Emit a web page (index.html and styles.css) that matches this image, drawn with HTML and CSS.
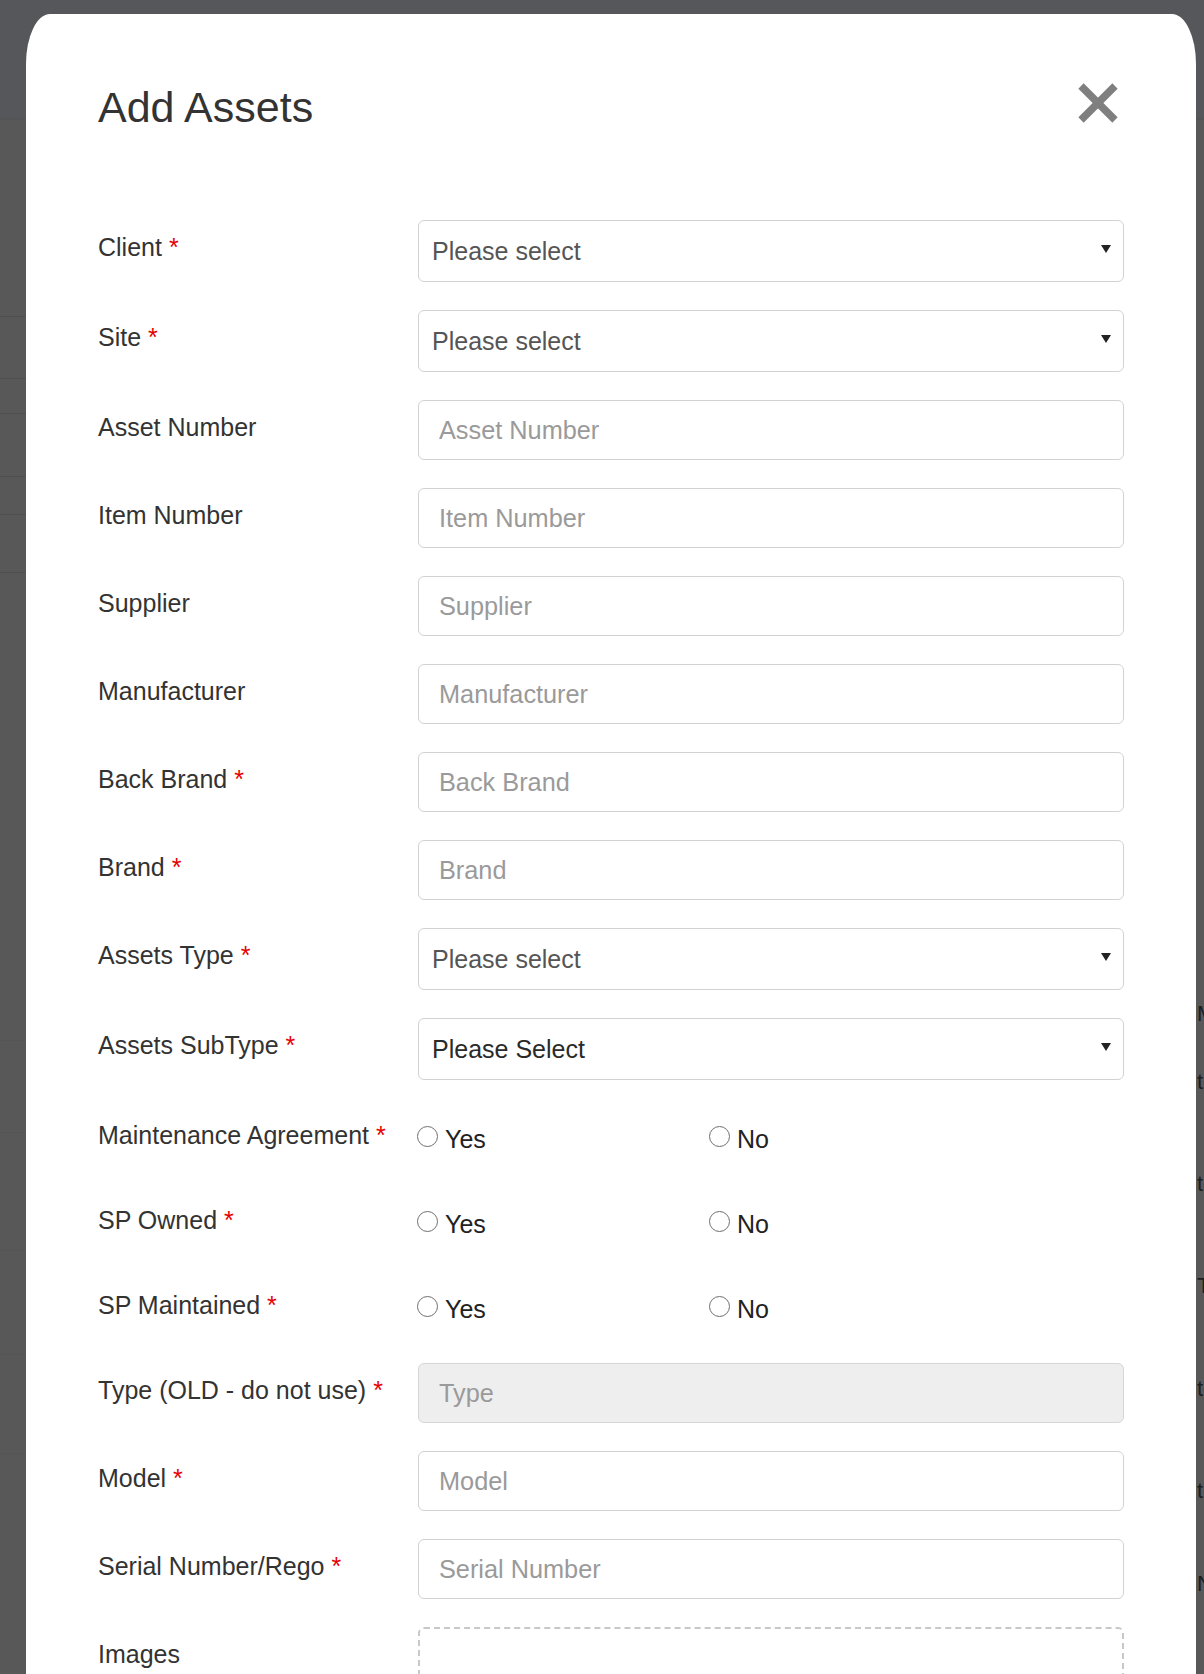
FILE: index.html
```html
<!DOCTYPE html>
<html lang="en">
<head>
<meta charset="utf-8">
<title>Add Assets</title>
<link rel="stylesheet" href="styles.css">
</head>
<body>
<div class="backdrop">
  <div class="bd-top"></div>
  <div class="bd-body">
    <div class="bd-left">
      <div class="bl bl1"></div>
      <div class="bl bl2"></div>
      <div class="bl bl3"></div>
      <div class="bl bl4"></div>
      <div class="bl bl5"></div>
      <div class="bl bl6"></div>
      <div class="bl bl7"></div>
      <div class="bl bl8"></div>
      <div class="bl bl9"></div>
      <div class="bl bl10"></div>
      <div class="bl bl11"></div>
    </div>
    <div class="bd-mid"></div>
    <div class="bd-right">
      <div class="bw w1">Model</div>
      <div class="bw w2">test</div>
      <div class="bw w3">test</div>
      <div class="bw w4">Type</div>
      <div class="bw w5">test</div>
      <div class="bw w6">test</div>
      <div class="bw w7">No</div>
    </div>
  </div>
</div>

<div class="modal">
  <div class="modal-header">
    <h1 class="modal-title">Add Assets</h1>
    <button class="close" type="button" aria-label="Close">
      <svg viewBox="0 0 40 40" width="40" height="40"><line x1="3" y1="3" x2="37" y2="37"/><line x1="37" y1="3" x2="3" y2="37"/></svg>
    </button>
  </div>
  <form class="modal-body">
    <div class="form-group sel-row">
      <label class="form-label">Client <span class="req">*</span></label>
      <div class="control"><div class="select"><span class="sel-text">Please select</span><svg class="caret" viewBox="0 0 10 8" width="10" height="8"><path d="M0 0h10L5 8z"/></svg></div></div>
    </div>
    <div class="form-group sel-row">
      <label class="form-label">Site <span class="req">*</span></label>
      <div class="control"><div class="select"><span class="sel-text">Please select</span><svg class="caret" viewBox="0 0 10 8" width="10" height="8"><path d="M0 0h10L5 8z"/></svg></div></div>
    </div>
    <div class="form-group">
      <label class="form-label">Asset Number</label>
      <div class="control"><input class="input" type="text" placeholder="Asset Number"></div>
    </div>
    <div class="form-group">
      <label class="form-label">Item Number</label>
      <div class="control"><input class="input" type="text" placeholder="Item Number"></div>
    </div>
    <div class="form-group">
      <label class="form-label">Supplier</label>
      <div class="control"><input class="input" type="text" placeholder="Supplier"></div>
    </div>
    <div class="form-group">
      <label class="form-label">Manufacturer</label>
      <div class="control"><input class="input" type="text" placeholder="Manufacturer"></div>
    </div>
    <div class="form-group">
      <label class="form-label">Back Brand <span class="req">*</span></label>
      <div class="control"><input class="input" type="text" placeholder="Back Brand"></div>
    </div>
    <div class="form-group">
      <label class="form-label">Brand <span class="req">*</span></label>
      <div class="control"><input class="input" type="text" placeholder="Brand"></div>
    </div>
    <div class="form-group sel-row">
      <label class="form-label">Assets Type <span class="req">*</span></label>
      <div class="control"><div class="select"><span class="sel-text">Please select</span><svg class="caret" viewBox="0 0 10 8" width="10" height="8"><path d="M0 0h10L5 8z"/></svg></div></div>
    </div>
    <div class="form-group sel-row">
      <label class="form-label">Assets SubType <span class="req">*</span></label>
      <div class="control"><div class="select"><span class="sel-text dark">Please Select</span><svg class="caret" viewBox="0 0 10 8" width="10" height="8"><path d="M0 0h10L5 8z"/></svg></div></div>
    </div>
    <div class="form-group radio-row">
      <label class="form-label">Maintenance Agreement <span class="req">*</span></label>
      <div class="control radios">
        <label class="radio-opt"><input type="radio" name="ma"><span>Yes</span></label>
        <label class="radio-opt"><input type="radio" name="ma"><span>No</span></label>
      </div>
    </div>
    <div class="form-group radio-row">
      <label class="form-label">SP Owned <span class="req">*</span></label>
      <div class="control radios">
        <label class="radio-opt"><input type="radio" name="spo"><span>Yes</span></label>
        <label class="radio-opt"><input type="radio" name="spo"><span>No</span></label>
      </div>
    </div>
    <div class="form-group radio-row">
      <label class="form-label">SP Maintained <span class="req">*</span></label>
      <div class="control radios">
        <label class="radio-opt"><input type="radio" name="spm"><span>Yes</span></label>
        <label class="radio-opt"><input type="radio" name="spm"><span>No</span></label>
      </div>
    </div>
    <div class="form-group">
      <label class="form-label">Type (OLD - do not use) <span class="req">*</span></label>
      <div class="control"><input class="input" type="text" placeholder="Type" disabled></div>
    </div>
    <div class="form-group">
      <label class="form-label">Model <span class="req">*</span></label>
      <div class="control"><input class="input" type="text" placeholder="Model"></div>
    </div>
    <div class="form-group">
      <label class="form-label">Serial Number/Rego <span class="req">*</span></label>
      <div class="control"><input class="input" type="text" placeholder="Serial Number"></div>
    </div>
    <div class="form-group">
      <label class="form-label">Images</label>
      <div class="control"><div class="dropzone"></div></div>
    </div>
  </form>
</div>
</body>
</html>
```

FILE: styles.css
```css
html, body {
  margin: 0;
  padding: 0;
  height: 1674px;
  overflow: hidden;
}
body {
  background: #585858;
  font-family: "Liberation Sans", Arial, sans-serif;
  color: #333;
  position: relative;
}

/* page behind the overlay */
.backdrop {
  position: absolute;
  inset: 0;
  z-index: 0;
  display: flex;
  flex-direction: column;
}
.bd-top {
  height: 118px;
  background: #55575a;
  border-bottom: 2px solid #525456;
}
.bd-body {
  flex: 1;
  display: flex;
}
.bd-left {
  width: 26px;
  display: flex;
  flex-direction: column;
}
.bl { border-bottom: 1px solid #505050; box-sizing: border-box; }
.bl1 { height: 197px; }
.bl2 { height: 62px; }
.bl3 { height: 35px; }
.bl4 { height: 63px; }
.bl5 { height: 38px; }
.bl6 { height: 58px; }
.bl7 { height: 468px; border-bottom-color: #555; }
.bl8 { height: 92px; border-bottom-color: #555; }
.bl9 { height: 118px; border-bottom-color: #555; }
.bl10 { height: 104px; border-bottom-color: #555; }
.bl11 { height: 99px; border-bottom-color: #555; }
.bd-mid { flex: 1; }
.bd-right {
  width: 8px;
  overflow: hidden;
  white-space: nowrap;
  font-size: 22px;
  line-height: 30px;
  color: #1e1e1e;
}
.bw { padding-left: 1px; }
.w1 { margin-top: 879px; }
.w2 { margin-top: 38px; }
.w3 { margin-top: 72px; }
.w4 { margin-top: 72px; }
.w5 { margin-top: 73px; }
.w6 { margin-top: 72px; }
.w7 { margin-top: 63px; }

/* modal */
.modal {
  position: relative;
  z-index: 1;
  margin: 14px 8px 0 26px;
  min-height: 1800px;
  background: #fff;
  border-radius: 24px 24px 0 0 / 50px 50px 0 0;
  box-sizing: border-box;
  padding: 0 72px;
}
.modal-header {
  display: flex;
  justify-content: space-between;
  align-items: flex-start;
  padding-top: 69px;
}
.modal-title {
  margin: 0;
  font-size: 43px;
  line-height: 48px;
  font-weight: normal;
  color: #333;
}
.close {
  border: 0;
  background: none;
  padding: 0;
  margin: 0 6px 0 0;
  width: 40px;
  height: 40px;
  cursor: pointer;
}
.close svg { display: block; }
.close line {
  stroke: #7f7f7f;
  stroke-width: 7.5;
}

.modal-body {
  padding-top: 89px;
  margin: 0;
}
.form-group {
  display: flex;
  margin-bottom: 28px;
}
.form-label {
  width: 320px;
  flex: none;
  font-size: 25px;
  line-height: 36px;
  padding-top: 9px;
  color: #333;
}
.req { color: #e60000; }
.control {
  flex: 1;
  min-width: 0;
}

.select {
  height: 62px;
  box-sizing: border-box;
  border: 1px solid #d2d2d2;
  border-radius: 6px;
  display: flex;
  align-items: center;
  justify-content: space-between;
  padding: 0 12px 0 13px;
  background: #fff;
}
.sel-text {
  font-size: 25px;
  color: #555;
}
.sel-text.dark { color: #2a2a2a; }
.caret {
  display: block;
  fill: #222;
  margin-top: -4px;
}

.input {
  display: block;
  width: 100%;
  height: 60px;
  box-sizing: border-box;
  border: 1px solid #d2d2d2;
  border-radius: 6px;
  padding: 0 20px;
  font-family: "Liberation Sans", Arial, sans-serif;
  font-size: 25.3px;
  color: #555;
  background: #fff;
  outline: none;
}
.input::placeholder { color: #9a9a9a; opacity: 1; }
.input:disabled { background: #eeeeee; border-color: #d6d6d6; }

.radio-row { min-height: 57px; }
.radios {
  display: grid;
  grid-template-columns: 292px 1fr;
  align-items: start;
  padding-top: 13px;
}
.radio-opt {
  display: flex;
  align-items: flex-start;
  font-size: 25px;
  line-height: 36px;
  color: #222;
}
.radio-opt input {
  appearance: none;
  -webkit-appearance: none;
  margin: 5px 7px 0 -1px;
  width: 21px;
  height: 21px;
  box-sizing: border-box;
  border: 1.5px solid #6f6f6f;
  border-radius: 50%;
  background: #fff;
  flex: none;
}

.dropzone {
  height: 160px;
  box-sizing: border-box;
  border: 2px dashed #c8c8c8;
  border-radius: 6px;
}
```
